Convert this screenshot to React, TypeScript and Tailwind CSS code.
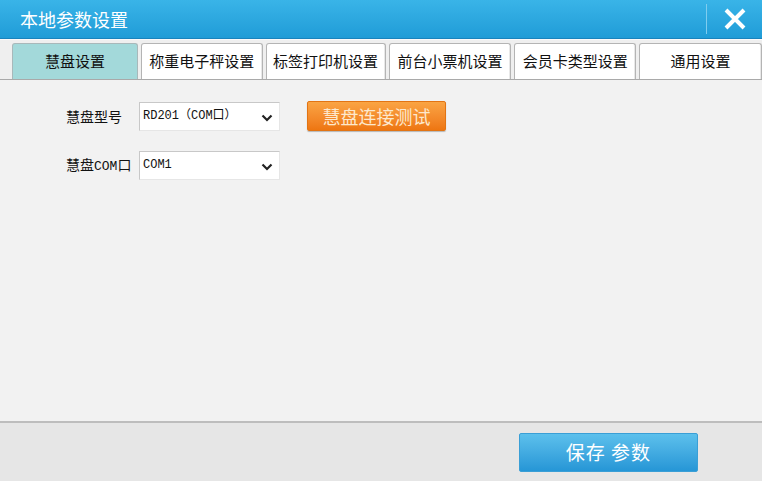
import React from "react";

const cjk = { fontFamily: '"Noto Sans CJK SC", "Noto Sans", sans-serif' };
const mono = { fontFamily: '"Liberation Mono", "Noto Sans CJK SC", monospace' };

const tabs = [
  { name: "慧盘设置", w: "w-[126px]" },
  { name: "称重电子秤设置", w: "w-[122px]" },
  { name: "标签打印机设置", w: "w-[120px]" },
  { name: "前台小票机设置", w: "w-[123px]" },
  { name: "会员卡类型设置", w: "w-[122px]" },
  { name: "通用设置", w: "w-[123px]" },
];

function Chevron() {
  return (
    <svg width="12" height="8" viewBox="0 0 12 8" className="absolute right-[6px] top-[11px] pointer-events-none">
      <path d="M1.5 1.5 L6 6 L10.5 1.5" fill="none" stroke="#222" strokeWidth="2.2" />
    </svg>
  );
}

function SelectBox({ value }: { value: string }) {
  return (
    <div className="relative w-[141px] h-[29px] bg-white border border-[#c8c8c8] border-r-[#e6e6e6] border-b-[#e6e6e6]">
      <div className="pl-[3px] leading-[27px] text-[12px] text-[#111] whitespace-nowrap" style={mono}>
        {value}
      </div>
      <Chevron />
    </div>
  );
}

export default function App() {
  return (
    <div className="w-[762px] h-[481px] flex flex-col bg-[#f2f2f2] overflow-hidden" style={cjk}>
      <div className="h-[39px] shrink-0 flex items-center bg-gradient-to-b from-[#39b4e8] to-[#1f9cd7] border-b border-[#1983bd]">
        <div className="pl-[20px] flex-1 text-white text-[18px] leading-none">本地参数设置</div>
        <div className="w-px h-[30px] bg-[#7fcdef]"></div>
        <div className="w-[55px] flex items-center justify-center">
          <svg width="24" height="24" viewBox="0 0 24 24">
            <path d="M3 3 L21 21 M21 3 L3 21" stroke="white" strokeWidth="4" strokeLinecap="butt" />
          </svg>
        </div>
      </div>
      <div className="h-[41px] shrink-0 flex items-end pl-[12px] gap-[3px] bg-[#efefef] border-t border-[#fafafa] border-b border-b-[#a9a9a9]">
        {tabs.map((t, i) => (
          <div
            key={t.name}
            className={
              "h-[36px] flex items-center justify-center rounded-t-[3px] border border-b-0 text-[15px] text-[#111] " +
              t.w +
              (i === 0 ? " bg-[#a3d9da] border-[#a8b8ba]" : " bg-white border-[#b4b4b4] shadow-[inset_1px_1px_0_#fff,inset_-1px_0_0_#e8e8e8]")
            }
          >
            {t.name}
          </div>
        ))}
      </div>
      <div className="flex-1 pt-[21px] pl-[66px] flex flex-col gap-[20px]">
        <div className="flex items-center">
          <div className="w-[73px] text-[14px] text-[#111] whitespace-nowrap">慧盘型号</div>
          <SelectBox value="RD201（COM口）" />
          <button className="ml-[27px] w-[139px] h-[30px] rounded-[2px] bg-gradient-to-b from-[#faa443] to-[#ee7610] border border-[#e27414] shadow-[0_1px_1px_rgba(0,0,0,0.25)] text-[#fde8cc] text-[18px]">
            慧盘连接测试
          </button>
        </div>
        <div className="flex items-center">
          <div className="w-[73px] text-[14px] text-[#111] whitespace-nowrap">
            慧盘<span className="text-[13px]" style={mono}>COM</span>口
          </div>
          <SelectBox value="COM1" />
        </div>
      </div>
      <div className="h-[60px] shrink-0 bg-[#e6e6e6] border-t-2 border-[#bdbdbd] flex justify-end pr-[64px] pt-[10px]">
        <button className="w-[179px] h-[39px] rounded-[2px] bg-gradient-to-b from-[#5cc0ec] to-[#2596d6] border border-[#3a9fd6] text-white text-[19px] tracking-[1px]">
          保存 参数
        </button>
      </div>
    </div>
  );
}
